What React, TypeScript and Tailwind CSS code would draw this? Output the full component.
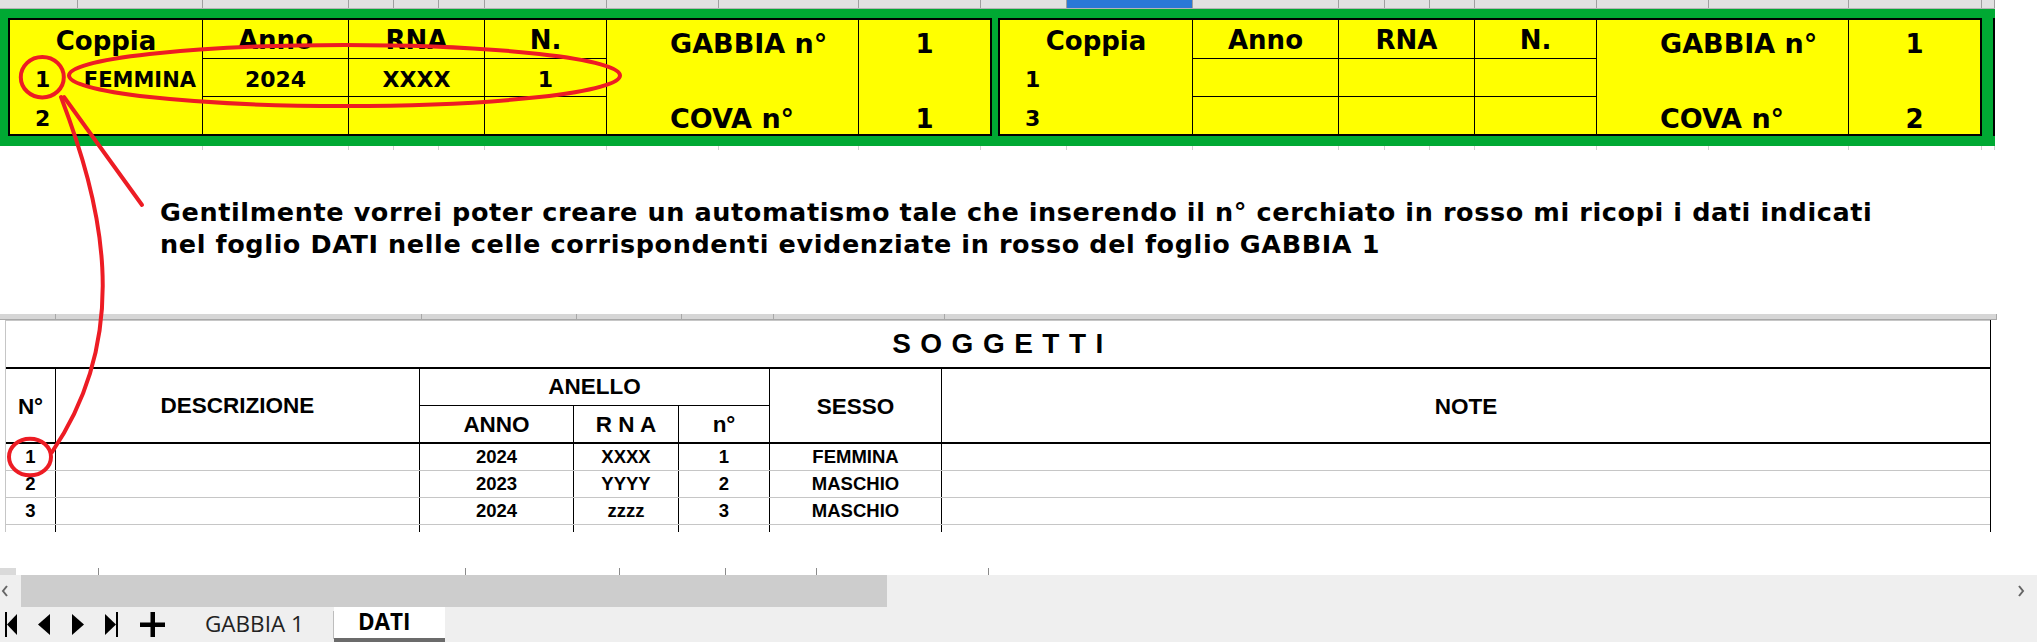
import React from "react";

const DJ = "font-['DejaVu_Sans',sans-serif]";
const LS = "font-['Liberation_Sans',Arial,sans-serif]";
const OS = "font-['Open_Sans','Noto_Sans',sans-serif]";

const topCols = [78, 125, 146, 45, 45, 46, 122, 112, 140, 122, 86, 126, 146, 46, 45, 45, 122, 112, 140, 133, 13];
const datiCols = [56, 366, 155, 105, 92, 171, 1052];
const partialCols = [83, 367, 154, 106, 91, 172];

function HeaderStrip() {
  return (
    <div className="flex h-[9px] w-[1995px] border-b border-[#b4b4b4]">
      {topCols.map((w, i) => (
        <div
          key={i}
          className={`h-full border-r border-[#9e9e9e] ${i === 11 ? "bg-[#2a78d6]" : "bg-[#e1e1e1]"}`}
          style={{ width: w }}
        />
      ))}
    </div>
  );
}

function TickStrip() {
  return (
    <div className="flex h-[4px] w-[1995px]">
      {topCols.map((w, i) => (
        <div key={i} className="h-full border-r border-[#d0d0d0]" style={{ width: w }} />
      ))}
    </div>
  );
}

type CageProps = {
  n1: string;
  n2: string;
  fem?: string;
  data: [string, string, string];
  gabbia: string;
  cova: string;
};

function Cage({ n1, n2, fem, data, gabbia, cova }: CageProps) {
  const cols: [string, number, string][] = [
    ["Anno", 146, data[0]],
    ["RNA", 136, data[1]],
    ["N.", 122, data[2]],
  ];
  return (
    <div className={`${DJ} flex h-[118px] w-[984px] shrink-0 border-2 border-black bg-[#ffff00] font-bold text-black`}>
      <div className="flex w-[193px] flex-col border-r border-black">
        <div className="flex h-[39px] items-center justify-center pt-[2px] text-[26px] leading-none">Coppia</div>
        <div className="flex h-[38px] items-center justify-between pl-[25px] pr-[6px] pt-[4px] leading-none">
          <span className="text-[22px]">{n1}</span>
          {fem ? <span className="text-[21px]">{fem}</span> : null}
        </div>
        <div className="flex h-[37px] items-center pl-[25px] pt-[7px] text-[22px] leading-none">{n2}</div>
      </div>
      {cols.map(([h, w, v]) => (
        <div key={h} className="flex flex-col border-r border-black" style={{ width: w }}>
          <div className="flex h-[39px] items-center justify-center border-b border-black pt-[2px] text-[26px] leading-none">
            {h}
          </div>
          <div className="flex h-[38px] items-center justify-center border-b border-black pt-[4px] text-[22px] leading-none">
            {v}
          </div>
          <div className="h-[37px]" />
        </div>
      ))}
      <div className="flex w-[252px] flex-col border-r border-black">
        <div className="flex h-[39px] items-center pl-[63px] pt-[8px] text-[27px] leading-none">GABBIA n°</div>
        <div className="h-[38px]" />
        <div className="flex h-[37px] items-center pl-[63px] pt-[6px] text-[27px] leading-none">COVA n°</div>
      </div>
      <div className="flex w-[131px] flex-col">
        <div className="flex h-[39px] items-center justify-center pt-[8px] text-[26px] leading-none">{gabbia}</div>
        <div className="h-[38px]" />
        <div className="flex h-[37px] items-center justify-center pt-[6px] text-[26px] leading-none">{cova}</div>
      </div>
    </div>
  );
}

const GRID = "grid grid-cols-[50px_364px_154px_105px_91px_172px_1fr]";

function DataRow({ n, anno, rna, num, sesso }: { n: string; anno: string; rna: string; num: string; sesso: string }) {
  const cell = "flex items-center justify-center border-r border-black pt-[1px]";
  return (
    <div className={`${GRID} h-[27px] border-b border-[#c6c6c6] text-[18.5px] leading-none`}>
      <div className={cell}>{n}</div>
      <div className={cell} />
      <div className={cell}>{anno}</div>
      <div className={cell}>{rna}</div>
      <div className={cell}>{num}</div>
      <div className={cell}>{sesso}</div>
      <div />
    </div>
  );
}

function Soggetti() {
  const hc = "flex items-center justify-center border-r border-black";
  return (
    <div className={`${LS} ml-[5px] h-[212px] w-[1986px] overflow-hidden border-l border-r border-l-[#c6c6c6] border-r-black font-bold text-black`}>
      <div className="flex h-[49px] items-center justify-center border-t border-b-2 border-t-[#c6c6c6] border-b-black pl-[9px] text-[28px] leading-none tracking-[9.5px]">
        SOGGETTI
      </div>
      <div className={`${GRID} h-[75px] grid-rows-[37px_36px] border-b-2 border-black text-[22.5px] leading-none`}>
        <div className={`${hc} row-span-2 pt-[3px]`}>N°</div>
        <div className={`${hc} row-span-2 pt-[1px]`}>DESCRIZIONE</div>
        <div className={`${hc} col-span-3 border-b`}>ANELLO</div>
        <div className={`${hc} row-span-2 pt-[3px]`}>SESSO</div>
        <div className="row-span-2 flex items-center justify-center pt-[3px]">NOTE</div>
        <div className={`${hc} pt-[3px]`}>ANNO</div>
        <div className={`${hc} pt-[3px]`}>R N A</div>
        <div className={`${hc} pt-[3px]`}>n°</div>
      </div>
      <DataRow n="1" anno="2024" rna="XXXX" num="1" sesso="FEMMINA" />
      <DataRow n="2" anno="2023" rna="YYYY" num="2" sesso="MASCHIO" />
      <DataRow n="3" anno="2024" rna="zzzz" num="3" sesso="MASCHIO" />
      <div className={`${GRID} h-[7px]`}>
        <div className="border-r border-black" />
        <div className="border-r border-black" />
        <div className="border-r border-black" />
        <div className="border-r border-black" />
        <div className="border-r border-black" />
        <div className="border-r border-black" />
        <div />
      </div>
    </div>
  );
}

function NavIcon({ kind }: { kind: "first" | "prev" | "next" | "last" }) {
  return (
    <svg width="14" height="25" viewBox="0 0 14 25" className="shrink-0">
      {kind === "first" && (
        <>
          <rect x="0" y="0" width="2" height="25" fill="#000" />
          <polygon points="2,12.5 12,2 12,23" fill="#000" />
        </>
      )}
      {kind === "prev" && <polygon points="0,12.5 12,2 12,23" fill="#000" />}
      {kind === "next" && <polygon points="0,2 12,12.5 0,23" fill="#000" />}
      {kind === "last" && (
        <>
          <polygon points="0,2 11,12.5 0,23" fill="#000" />
          <rect x="11" y="0" width="2" height="25" fill="#000" />
        </>
      )}
    </svg>
  );
}

export default function App() {
  return (
    <div className="relative h-[642px] w-[2037px] overflow-hidden bg-white">
      <HeaderStrip />
      <div className="flex h-[137px] w-[1995px] gap-[6px] bg-[#00a933] pl-[8px] pt-[9px]">
        <Cage n1="1" n2="2" fem="FEMMINA" data={["2024", "XXXX", "1"]} gabbia="1" cova="1" />
        <Cage n1="1" n2="3" data={["", "", ""]} gabbia="1" cova="2" />
        <div className="ml-[5px] h-[118px] w-[2px] bg-black" />
      </div>
      <div className="h-[168px]">
        <TickStrip />
        <div className={`${DJ} whitespace-nowrap pl-[160px] pt-[46px] text-[25.5px] font-bold leading-[32px] tracking-[0.6px] text-black`}>
          <div>
            Gentilmente vorrei poter creare un automatismo tale che inserendo il n° cerchiato in rosso mi ricopi i dati indicati
          </div>
          <div>nel foglio DATI nelle celle corrispondenti evidenziate in rosso del foglio GABBIA 1</div>
        </div>
      </div>
      <div className="flex h-[6px] w-[1997px]">
        {datiCols.map((w, i) => (
          <div key={i} className="h-full border-r border-b border-[#a8a8a8] bg-[#d6d6d6]" style={{ width: w }} />
        ))}
      </div>
      <Soggetti />
      <div className="h-[36px]" />
      <div className="flex h-[7px] w-full overflow-hidden">
        <div className="h-full w-[16px] bg-[#dadada]" />
        {partialCols.map((w, i) => (
          <div key={i} className="h-full border-r border-[#8a8a8a]" style={{ width: w }} />
        ))}
      </div>
      <div className="flex h-[32px] w-full items-center bg-[#efefef]">
        <svg width="8" height="12" viewBox="0 0 8 12" className="ml-[1px] shrink-0">
          <polyline points="6,1 2,6 6,11" fill="none" stroke="#666" strokeWidth="2" />
        </svg>
        <div className="ml-[12px] h-full w-[866px] bg-[#cdcdcd]" />
        <div className="flex-1" />
        <svg width="8" height="12" viewBox="0 0 8 12" className="mr-[12px] shrink-0">
          <polyline points="2,1 6,6 2,11" fill="none" stroke="#666" strokeWidth="2" />
        </svg>
      </div>
      <div className={`${OS} flex h-[35px] w-full items-center bg-[#efefef]`}>
        <div className="ml-[5px] flex items-center">
          <NavIcon kind="first" />
        </div>
        <div className="ml-[19px] flex items-center">
          <NavIcon kind="prev" />
        </div>
        <div className="ml-[20px] flex items-center">
          <NavIcon kind="next" />
        </div>
        <div className="ml-[19px] flex items-center">
          <NavIcon kind="last" />
        </div>
        <svg width="25" height="25" viewBox="0 0 25 25" className="ml-[21px] shrink-0">
          <rect x="10.5" y="0" width="4.5" height="25" fill="#000" />
          <rect x="0" y="10.5" width="25" height="4.5" fill="#000" />
        </svg>
        <div className="ml-[40px] text-[22.5px] leading-none text-[#222]">GABBIA 1</div>
        <div className="ml-[29px] h-[28px] w-[1px] bg-[#bdbdbd]" />
        <div className="flex h-full w-[111px] flex-col self-stretch">
          <div className="flex flex-1 items-center bg-white pl-[24px] text-[22.5px] font-bold leading-none text-black">
            DATI
          </div>
          <div className="h-[4px] bg-[#6b6b6b]" />
        </div>
      </div>

      <svg className="pointer-events-none absolute left-0 top-0" width="2037" height="642" viewBox="0 0 2037 642">
        <g fill="none" stroke="#ed1c24" strokeWidth="4" strokeLinecap="round">
          <ellipse cx="344.5" cy="75.5" rx="275.5" ry="30.5" />
          <ellipse cx="42.3" cy="77.2" rx="21.5" ry="20.3" />
          <line x1="64" y1="97" x2="142" y2="205" />
          <path d="M 61 97 C 100 200, 135 330, 52 452" />
          <ellipse cx="30" cy="457" rx="21" ry="18.3" />
        </g>
      </svg>
    </div>
  );
}
